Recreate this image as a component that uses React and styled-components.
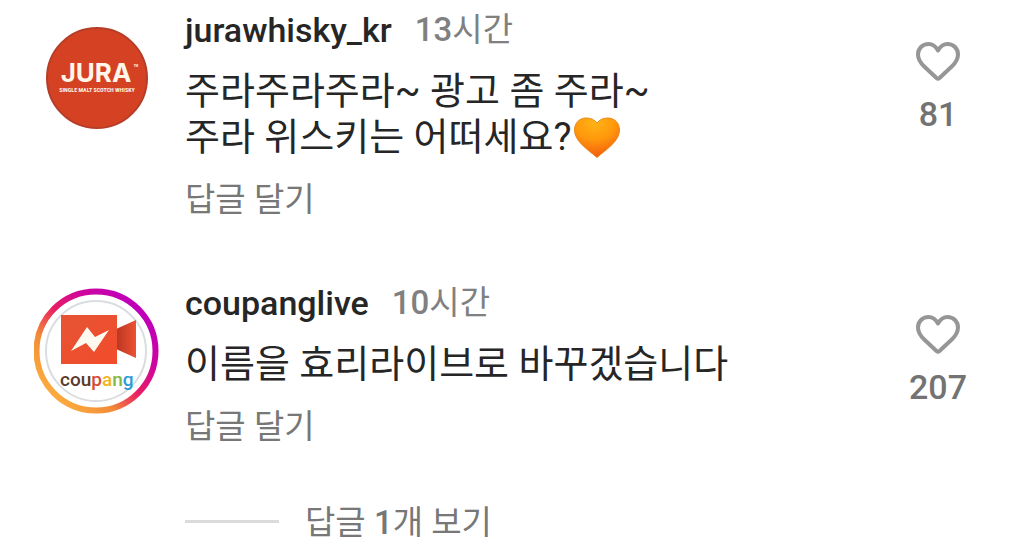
import React from "react";
import styled, { createGlobalStyle } from "styled-components";

const GlobalStyle = createGlobalStyle`
  * { box-sizing: border-box; }
  body {
    margin: 0;
    background: #fff;
    color: #262626;
    font-family: Roboto, "Noto Sans CJK KR", sans-serif;
  }
  button {
    border: 0;
    padding: 0;
    background: none;
    color: inherit;
    font: inherit;
    cursor: pointer;
  }
`;

const CommentList = styled.main`
  display: flex;
  flex-direction: column;
  gap: 63px;
  padding: 10px 32px 4px 33px;
`;

const Comment = styled.article`
  display: grid;
  grid-template-columns: 128px minmax(0, 1fr) 108px;
  column-gap: 24px;
`;

const AvatarLink = styled.a`
  display: flex;
  justify-content: center;
  padding-top: ${(p) => (p.$ring ? 5 : 16)}px;
  svg { display: block; }
`;

const Content = styled.div`
  display: flex;
  flex-direction: column;
  align-items: flex-start;
`;

const Meta = styled.header`
  display: flex;
  gap: 23px;
  font-size: 34px;
  line-height: 40px;
`;

const UserName = styled.a`
  color: #262626;
  font-weight: 500;
  text-decoration: none;
`;

const Time = styled.time`
  color: #808080;
  font-size: 33px;
`;

const Count = styled.span`
  font-weight: 500;
`;

const Message = styled.p`
  margin: 18px 0 20px;
  font-size: 38px;
  line-height: 46px;
`;

const Emoji = styled.svg`
  width: 48px;
  height: 42px;
  margin-left: 2px;
  vertical-align: -9px;
`;

const TextButton = styled.button`
  color: #777;
  font-size: 33px;
  line-height: 40px;
`;

const MoreReplies = styled.div`
  display: flex;
  align-items: center;
  gap: 26px;
  margin-top: 56px;
`;

const Dash = styled.span`
  width: 94px;
  height: 3px;
  margin-bottom: 4px;
  background: #dbdbdb;
`;

const LikeButton = styled.button`
  display: flex;
  flex-direction: column;
  align-items: center;
  align-self: start;
  gap: 12px;
  padding-top: 31px;
  color: #737373;
  font-size: 34px;
  font-weight: 500;
  line-height: 40px;
`;

function HeartIcon() {
  return (
    <svg width="46" height="41" viewBox="0 0 46 41" fill="none" aria-hidden="true">
      <path
        d="M23 9.500C20.500 5 17.500 3 13.500 3C7.500 3 3 7.500 3 13.500C3 18.500 5.500 22 9.500 25.800L21.500 37Q23 38.300 24.500 37L36.500 25.800C40.500 22 43 18.500 43 13.500C43 7.500 38.500 3 32.500 3C28.500 3 25.500 5 23 9.500Z"
        stroke="#969696"
        strokeWidth="4"
        strokeLinejoin="round"
      />
    </svg>
  );
}

function OrangeHeart() {
  return (
    <Emoji viewBox="0 0 48 42" role="img" aria-label="주황색 하트">
      <defs>
        <radialGradient id="heartFill" cx="45%" cy="10%" r="90%">
          <stop offset="0" stopColor="#ffb416" />
          <stop offset="0.5" stopColor="#ff980b" />
          <stop offset="1" stopColor="#f45a10" />
        </radialGradient>
      </defs>
      <path
        d="M24 6C21.500 2.500 17.500 1 13 1C6.500 1 1.500 6 1.500 13C1.500 24 14 32 24 40.500C34 32 46.500 24 46.500 13C46.500 6 41.500 1 35 1C30.500 1 26.500 2.500 24 6Z"
        fill="url(#heartFill)"
        stroke="#e98a16"
        strokeWidth="1"
      />
    </Emoji>
  );
}

function JuraLogo() {
  return (
    <svg width="104" height="104" viewBox="0 0 104 104" role="img" aria-label="Jura">
      <circle cx="52" cy="52" r="50" fill="#d54123" stroke="#b53e29" strokeWidth="2" />
      <g fill="#fff5e8" fontWeight="700" textAnchor="middle">
        <text x="51" y="56" fontSize="26" fontFamily="Inter, sans-serif">JURA</text>
        <text x="52" y="66" fontSize="6" fontFamily="'Roboto Condensed', Roboto, sans-serif">
          SINGLE MALT SCOTCH WHISKY
        </text>
        <text x="91" y="41" fontSize="3" fontFamily="Roboto, sans-serif">TM</text>
      </g>
    </svg>
  );
}

function CoupangLogo() {
  return (
    <svg width="126" height="126" viewBox="0 0 126 126" role="img" aria-label="Coupang">
      <defs>
        <linearGradient id="storyRing" x1="0.150" y1="0.850" x2="0.850" y2="0.150">
          <stop offset="0" stopColor="#fba83d" />
          <stop offset="0.250" stopColor="#f28b38" />
          <stop offset="0.500" stopColor="#e91e63" />
          <stop offset="0.750" stopColor="#d0069b" />
          <stop offset="1" stopColor="#c000b8" />
        </linearGradient>
        <linearGradient id="lens" x1="0" y1="0" x2="1" y2="0">
          <stop offset="0" stopColor="#b93622" />
          <stop offset="1" stopColor="#ee5133" />
        </linearGradient>
        <linearGradient id="camera" x1="0" y1="0" x2="1" y2="1">
          <stop offset="0" stopColor="#e55434" />
          <stop offset="1" stopColor="#f24c2b" />
        </linearGradient>
      </defs>
      <circle cx="62" cy="63" r="59.500" fill="#fff" stroke="url(#storyRing)" strokeWidth="6" />
      <circle cx="62" cy="63" r="50" fill="none" stroke="#d9dde0" strokeWidth="2" />
      <path d="M82 41L102 32V70L82 61Z" fill="url(#lens)" />
      <rect x="27" y="27" width="56" height="49" fill="url(#camera)" />
      <path d="M37 63L53 39L61 49L75 42L60 64L52 55Z" fill="#fffaf0" />
      <text x="26" y="98" fontSize="19" fontWeight="500" fontFamily="Roboto, sans-serif">
        <tspan fill="#5b3a2b">cou</tspan>
        <tspan fill="#d94b32">p</tspan>
        <tspan fill="#f3b51f">a</tspan>
        <tspan fill="#82b944">n</tspan>
        <tspan fill="#2a9bd6">g</tspan>
      </text>
    </svg>
  );
}

function CommentItem({ user, hours, logo, ring, likes, children, replies }) {
  return (
    <Comment>
      <AvatarLink href={`#${user}`} $ring={ring}>{logo}</AvatarLink>
      <Content>
        <Meta>
          <UserName href={`#${user}`}>{user}</UserName>
          <Time><Count>{hours}</Count>시간</Time>
        </Meta>
        <Message>{children}</Message>
        <TextButton type="button">답글 달기</TextButton>
        {replies && (
          <MoreReplies>
            <Dash />
            <TextButton type="button">답글 <Count>{replies}</Count>개 보기</TextButton>
          </MoreReplies>
        )}
      </Content>
      <LikeButton type="button" aria-label={`좋아요 ${likes}`}>
        <HeartIcon />
        <span>{likes}</span>
      </LikeButton>
    </Comment>
  );
}

export default function App() {
  return (
    <>
      <GlobalStyle />
      <CommentList>
        <CommentItem user="jurawhisky_kr" hours={13} logo={<JuraLogo />} likes={81}>
          주라주라주라~ 광고 좀 주라~
          <br />
          주라 위스키는 어떠세요?
          <OrangeHeart />
        </CommentItem>
        <CommentItem
          user="coupanglive"
          hours={10}
          logo={<CoupangLogo />}
          ring
          likes={207}
          replies={1}
        >
          이름을 효리라이브로 바꾸겠습니다
        </CommentItem>
      </CommentList>
    </>
  );
}
